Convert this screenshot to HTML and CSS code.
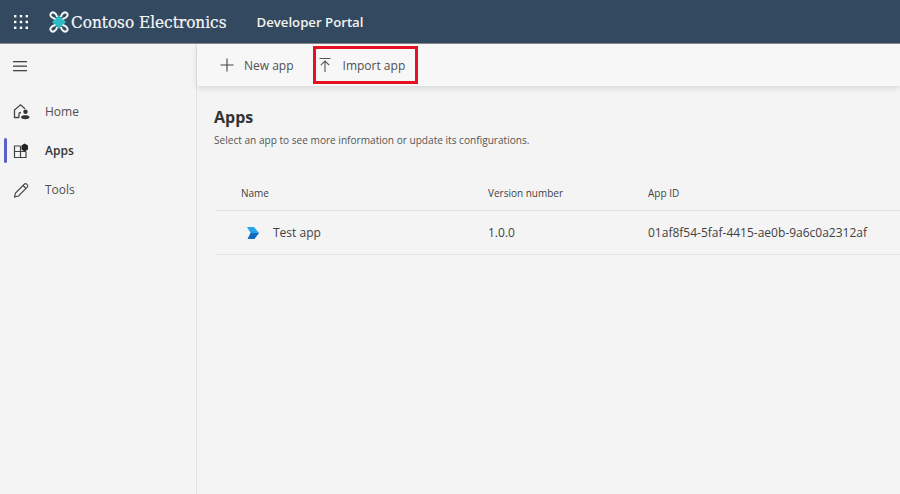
FILE: index.html
```html
<!DOCTYPE html>
<html lang="en">
<head>
    <meta charset="UTF-8">
    <title>Developer Portal</title>
    <link rel="stylesheet" href="styles.css">
</head>
<body>
    <div class="topbar">
        <div class="waffle">
            <svg width="16" height="16" viewBox="0 0 16 16" fill="#fff">
                <rect x="1" y="1" width="2.4" height="2.4"/><rect x="6.8" y="1" width="2.4" height="2.4"/><rect x="12.6" y="1" width="2.4" height="2.4"/>
                <rect x="1" y="6.8" width="2.4" height="2.4"/><rect x="6.8" y="6.8" width="2.4" height="2.4"/><rect x="12.6" y="6.8" width="2.4" height="2.4"/>
                <rect x="1" y="12.6" width="2.4" height="2.4"/><rect x="6.8" y="12.6" width="2.4" height="2.4"/><rect x="12.6" y="12.6" width="2.4" height="2.4"/>
            </svg>
        </div>
        <svg class="logo" width="20" height="22" viewBox="0 0 20 22">
            <polygon points="10,4 17,11 10,18 3,11" fill="#2bbcc4"/>
            <g fill="none" stroke="#f4f6f7" stroke-width="2">
                <path d="M6.500 8 C2.500 7 0.500 4.500 1.800 2.500 C3.300 0.300 7.500 1.500 8 6"/>
                <path d="M13.500 8 C17.500 7 19.500 4.500 18.200 2.500 C16.700 0.300 12.500 1.500 12 6"/>
                <path d="M6.500 14 C2.500 15 0.500 17.500 1.800 19.500 C3.300 21.700 7.500 20.500 8 16"/>
                <path d="M13.500 14 C17.500 15 19.500 17.500 18.200 19.500 C16.700 21.700 12.500 20.500 12 16"/>
            </g>
        </svg>
        <span class="brand">Contoso Electronics</span>
        <span class="portal">Developer Portal</span>
    </div>
    <div class="page">
        <div class="sidebar">
            <div class="hamburger">
                <svg width="16" height="12" viewBox="0 0 16 12" fill="#444">
                    <rect x="1" y="1" width="14" height="1.300"/><rect x="1" y="5.500" width="14" height="1.300"/><rect x="1" y="10" width="14" height="1.300"/>
                </svg>
            </div>
            <div class="navitem">
                <svg width="18" height="18" viewBox="0 0 18 18">
                    <path d="M6 14.500 H1.500 V7 L7.500 1.800 L12 5.800" fill="none" stroke="#444" stroke-width="1.300"/>
                    <path d="M6 14.500 V11 C6 9.800 7 9.500 8 9.500" fill="none" stroke="#444" stroke-width="1.300"/>
                    <circle cx="12.500" cy="8.800" r="2.200" fill="#333"/>
                    <path d="M8 14 C8 11.500 16.500 11.500 16.500 14 C16.500 17 8 17 8 14 Z" fill="#333"/>
                </svg>
                <span>Home</span>
            </div>
            <div class="navitem active">
                <svg width="18" height="18" viewBox="0 0 18 18">
                    <path d="M7.500 4 H1.500 V15.500 H13 V9.500 M7.500 4 V15.500 M1.500 9.500 H13" fill="none" stroke="#444" stroke-width="1.200"/>
                    <path d="M11.500 1.500 L15 3.500 L15 7.500 L11.500 9.500 L8.500 7.500 L8.500 3.500 Z" fill="#222"/>
                </svg>
                <span>Apps</span>
            </div>
            <div class="navitem">
                <svg width="18" height="18" viewBox="0 0 18 18">
                    <path d="M1.500 16 L2.500 12 L11.500 3 C12.800 1.700 15.800 4.200 14.500 6 L5.500 15 Z M10 4.500 L13 7.500" fill="none" stroke="#444" stroke-width="1.100"/>
                </svg>
                <span>Tools</span>
            </div>
        </div>
        <div class="main">
            <div class="toolbar">
                <div class="toolbtn">
                    <svg width="16" height="16" viewBox="0 0 16 16">
                        <path d="M8 1.500 V14.500 M1.500 8 H14.500" stroke="#444" stroke-width="1.100" fill="none"/>
                    </svg>
                    <span>New app</span>
                </div>
                <div class="toolbtn highlighted">
                    <svg width="16" height="16" viewBox="0 0 16 16">
                        <path d="M2.500 1.500 H13.500 M8 4 V15 M3.800 8.200 L8 4 L12.200 8.200" stroke="#555" stroke-width="1.100" fill="none"/>
                    </svg>
                    <span>Import app</span>
                </div>
            </div>
            <div class="content">
                <h1>Apps</h1>
                <p>Select an app to see more information or update its configurations.</p>
                <div class="row headrow">
                    <div class="cell name">Name</div>
                    <div class="cell version">Version number</div>
                    <div class="cell appid">App ID</div>
                </div>
                <div class="row approw">
                    <div class="cell name">
                        <svg width="14" height="14" viewBox="0 0 14 14">
                            <path d="M1 1 H8 L13 7 H4.500 Z" fill="#29a3e8"/>
                            <path d="M4.500 7 H13 L8.500 13 H1.500 Z" fill="#0f6cbd"/>
                        </svg>
                        <span>Test app</span>
                    </div>
                    <div class="cell version">1.0.0</div>
                    <div class="cell appid">01af8f54-5faf-4415-ae0b-9a6c0a2312af</div>
                </div>
            </div>
        </div>
    </div>
</body>
</html>
```

FILE: styles.css
```css
html, body {
    height: 100%;
}
body {
    margin: 0;
    background-color: #f4f4f4;
    font-family: "Open Sans", "Noto Sans", sans-serif;
    font-size: 12px;
    color: #424242;
    overflow: hidden;
}
.topbar {
    display: flex;
    align-items: center;
    height: 43px;
    background-color: #33495f;
    border-bottom: 1px solid #8a8a8a;
    color: #fff;
}
.waffle {
    display: flex;
    width: 43px;
    justify-content: center;
    margin-left: -1px;
}
.logo {
    margin-left: 7px;
}
.brand {
    margin-left: 2px;
    font-family: "DejaVu Serif Condensed", "DejaVu Serif", serif;
    font-size: 17px;
    color: #f7f8f9;
    -webkit-text-stroke: 0.200px #f7f8f9;
}
.portal {
    margin-left: 30px;
    font-weight: 600;
    font-size: 13.200px;
    color: #f2f4f0;
}
.page {
    display: flex;
    height: 450px;
}
.sidebar {
    width: 196px;
    flex-shrink: 0;
    border-right: 1px solid #e4e4e4;
}
.hamburger {
    display: flex;
    height: 44px;
    padding-left: 12px;
    align-items: center;
}
.navitem {
    position: relative;
    display: flex;
    align-items: center;
    height: 39px;
    padding-left: 13px;
    gap: 14px;
}
.navitem:nth-child(2) {
    margin-top: 4px;
}
.navitem span {
    color: #505050;
}
.navitem.active span {
    color: #333;
    font-weight: 600;
}
.navitem.active::before {
    content: "";
    position: absolute;
    left: 4px;
    top: 7px;
    width: 3px;
    height: 25px;
    border-radius: 2px;
    background-color: #5b5fc7;
}
.main {
    flex: 1;
    min-width: 0;
}
.toolbar {
    display: flex;
    align-items: center;
    height: 42px;
    padding-left: 22px;
    gap: 19px;
    background-color: #f7f7f7;
    box-shadow: 0 2px 6px rgba(0, 0, 0, 0.120);
}
.toolbtn {
    display: flex;
    align-items: center;
    gap: 9px;
    color: #505050;
}
.toolbtn.highlighted {
    height: 32px;
    padding: 0 10px 0 1px;
    gap: 10px;
    border: 3px solid #e81123;
}
.content {
    padding: 20px 0 0 18px;
}
h1 {
    margin: 0 0 0 -1px;
    font-size: 16px;
    font-weight: 700;
    line-height: 22px;
    color: #333;
}
p {
    margin: 5px 0 0 -1px;
    font-size: 10.100px;
    line-height: 15px;
    color: #555;
}
.row {
    display: flex;
    align-items: center;
    border-bottom: 1px solid #e2e2e2;
}
.headrow {
    margin-top: 28px;
    height: 34px;
    font-size: 10px;
}
.approw {
    height: 43px;
    font-size: 12px;
}
.cell.name {
    display: flex;
    align-items: center;
    width: 273px;
    padding-left: 26px;
    box-sizing: border-box;
    gap: 13px;
}
.approw .cell.name {
    padding-left: 31px;
}
.cell.version {
    width: 160px;
}
.cell.appid {
    flex: 1;
    white-space: nowrap;
}
```
